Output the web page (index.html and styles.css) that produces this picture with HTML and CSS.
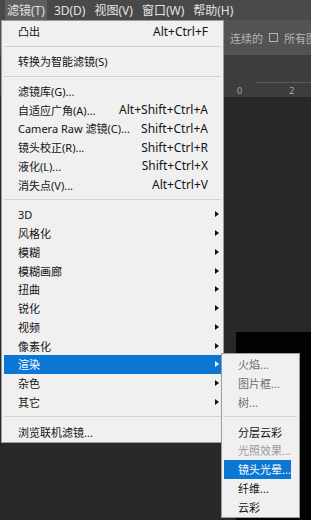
FILE: index.html
```html
<!DOCTYPE html>
<html lang="zh-CN">
<head>
<meta charset="utf-8">
<title>滤镜菜单</title>
<link rel="stylesheet" href="styles.css">
</head>
<body>
<div class="app">
  <div class="menubar">
    <span class="mb-item active">滤镜(T)</span>
    <span class="mb-item">3D(D)</span>
    <span class="mb-item">视图(V)</span>
    <span class="mb-item">窗口(W)</span>
    <span class="mb-item">帮助(H)</span>
  </div>
  <div class="optbar">
    <span>连续的</span><span class="chk"></span><span>所有图</span>
  </div>
  <div class="tabstrip"></div>
  <div class="ruler">
    <span class="rnum">0</span><span class="rnum">2</span>
  </div>
  <div class="workspace">
    <div class="doc"></div>
  </div>
</div>

<div class="menu main-menu">
  <div class="row"><span class="label">凸出</span><span class="sc">Alt+Ctrl+F</span></div>
  <div class="sep"></div>
  <div class="row"><span class="label">转换为智能滤镜(S)</span></div>
  <div class="sep"></div>
  <div class="row"><span class="label">滤镜库(G)...</span></div>
  <div class="row"><span class="label">自适应广角(A)...</span><span class="sc">Alt+Shift+Ctrl+A</span></div>
  <div class="row"><span class="label">Camera Raw 滤镜(C)...</span><span class="sc">Shift+Ctrl+A</span></div>
  <div class="row"><span class="label">镜头校正(R)...</span><span class="sc">Shift+Ctrl+R</span></div>
  <div class="row"><span class="label">液化(L)...</span><span class="sc">Shift+Ctrl+X</span></div>
  <div class="row"><span class="label">消失点(V)...</span><span class="sc">Alt+Ctrl+V</span></div>
  <div class="sep"></div>
  <div class="row sub"><span class="label">3D</span><span class="arrow"></span></div>
  <div class="row sub"><span class="label">风格化</span><span class="arrow"></span></div>
  <div class="row sub"><span class="label">模糊</span><span class="arrow"></span></div>
  <div class="row sub"><span class="label">模糊画廊</span><span class="arrow"></span></div>
  <div class="row sub"><span class="label">扭曲</span><span class="arrow"></span></div>
  <div class="row sub"><span class="label">锐化</span><span class="arrow"></span></div>
  <div class="row sub"><span class="label">视频</span><span class="arrow"></span></div>
  <div class="row sub"><span class="label">像素化</span><span class="arrow"></span></div>
  <div class="row sub hl"><span class="label">渲染</span><span class="arrow"></span></div>
  <div class="row sub"><span class="label">杂色</span><span class="arrow"></span></div>
  <div class="row sub"><span class="label">其它</span><span class="arrow"></span></div>
  <div class="sep"></div>
  <div class="row"><span class="label">浏览联机滤镜...</span></div>
</div>

<div class="menu sub-menu">
  <div class="row dis"><span class="label">火焰...</span></div>
  <div class="row dis"><span class="label">图片框...</span></div>
  <div class="row dis"><span class="label">树...</span></div>
  <div class="sep"></div>
  <div class="row"><span class="label">分层云彩</span></div>
  <div class="row dis2"><span class="label">光照效果...</span></div>
  <div class="row hl"><span class="label">镜头光晕...</span></div>
  <div class="row"><span class="label">纤维...</span></div>
  <div class="row"><span class="label">云彩</span></div>
</div>
</body>
</html>
```

FILE: styles.css
```css
html, body {
  margin: 0;
  padding: 0;
}
body {
  width: 311px;
  height: 520px;
  overflow: hidden;
  background: #282828;
  font-family: "Noto Sans", "Noto Sans CJK SC", sans-serif;
  position: relative;
}
.app {
  display: flex;
  flex-direction: column;
  height: 520px;
}
.menubar {
  height: 20px;
  flex: none;
  background: #494949;
  display: flex;
  align-items: stretch;
  padding-left: 5px;
  gap: 5px;
}
.mb-item {
  display: flex;
  align-items: center;
  padding: 0 2px;
  font-size: 12px;
  color: #e2e2e2;
  white-space: nowrap;
}
.mb-item.active {
  background: #5e5e5e;
}
.optbar {
  height: 35px;
  flex: none;
  background: #535353;
  display: flex;
  align-items: center;
  gap: 6px;
  padding-left: 230px;
  font-size: 11px;
  color: #b4b4b4;
  white-space: nowrap;
  overflow: hidden;
  font-family: "Noto Sans CJK SC", sans-serif;
}
.chk {
  width: 7px;
  height: 7px;
  border: 1px solid #b4b4b4;
  flex: none;
}
.tabstrip {
  height: 27px;
  flex: none;
  background: #3d3d3d;
}
.ruler {
  height: 15px;
  flex: none;
  background: #3d3d3d;
  display: flex;
  gap: 47px;
  padding-left: 237px;
  font-size: 9px;
  line-height: 13px;
  color: #a8a8a8;
  align-items: flex-end;
  background-image: linear-gradient(#5a5a5a, #5a5a5a);
  background-size: 56px 1px;
  background-position: 255px 0;
  background-repeat: no-repeat;
}
.workspace {
  flex: 1;
  background: #282828;
  padding: 235px 0 0 236px;
  display: flex;
}
.doc {
  flex: 1;
  background: #020202;
}

.menu {
  position: absolute;
  background: #f0f0f0;
  border: 1px solid #9c9c9c;
  padding: 1px 2px;
  box-sizing: border-box;
  font-size: 11px;
  color: #141414;
  font-family: "Noto Sans", "Noto Sans CJK SC", sans-serif;
}
.main-menu {
  left: 1px;
  top: 20px;
  width: 223px;
}
.sub-menu {
  left: 221px;
  top: 353px;
  width: 79px;
}
.row {
  height: 18.75px;
  display: flex;
  align-items: center;
  padding-left: 14px;
  white-space: nowrap;
}
.sub-menu .row {
  padding-left: 14px;
  margin-right: 6px;
}
.label {
  flex: 1;
}
.sc {
  font-size: 12px;
  margin-right: 13px;
}
.arrow {
  width: 0;
  height: 0;
  border-top: 3.5px solid transparent;
  border-bottom: 3.5px solid transparent;
  border-left: 4px solid #111;
  margin-right: 2px;
}
.row.hl {
  background: #0b76d4;
  color: #ffffff;
}
.row.hl .arrow {
  border-left-color: #ffffff;
}
.row.dis {
  color: #6e6e6e;
}
.row.dis2 {
  color: #9a9a9a;
}
.sep {
  height: 11px;
  display: flex;
  align-items: center;
}
.sep::before {
  content: "";
  flex: 1;
  height: 1px;
  background: #d2d2d2;
}
```
